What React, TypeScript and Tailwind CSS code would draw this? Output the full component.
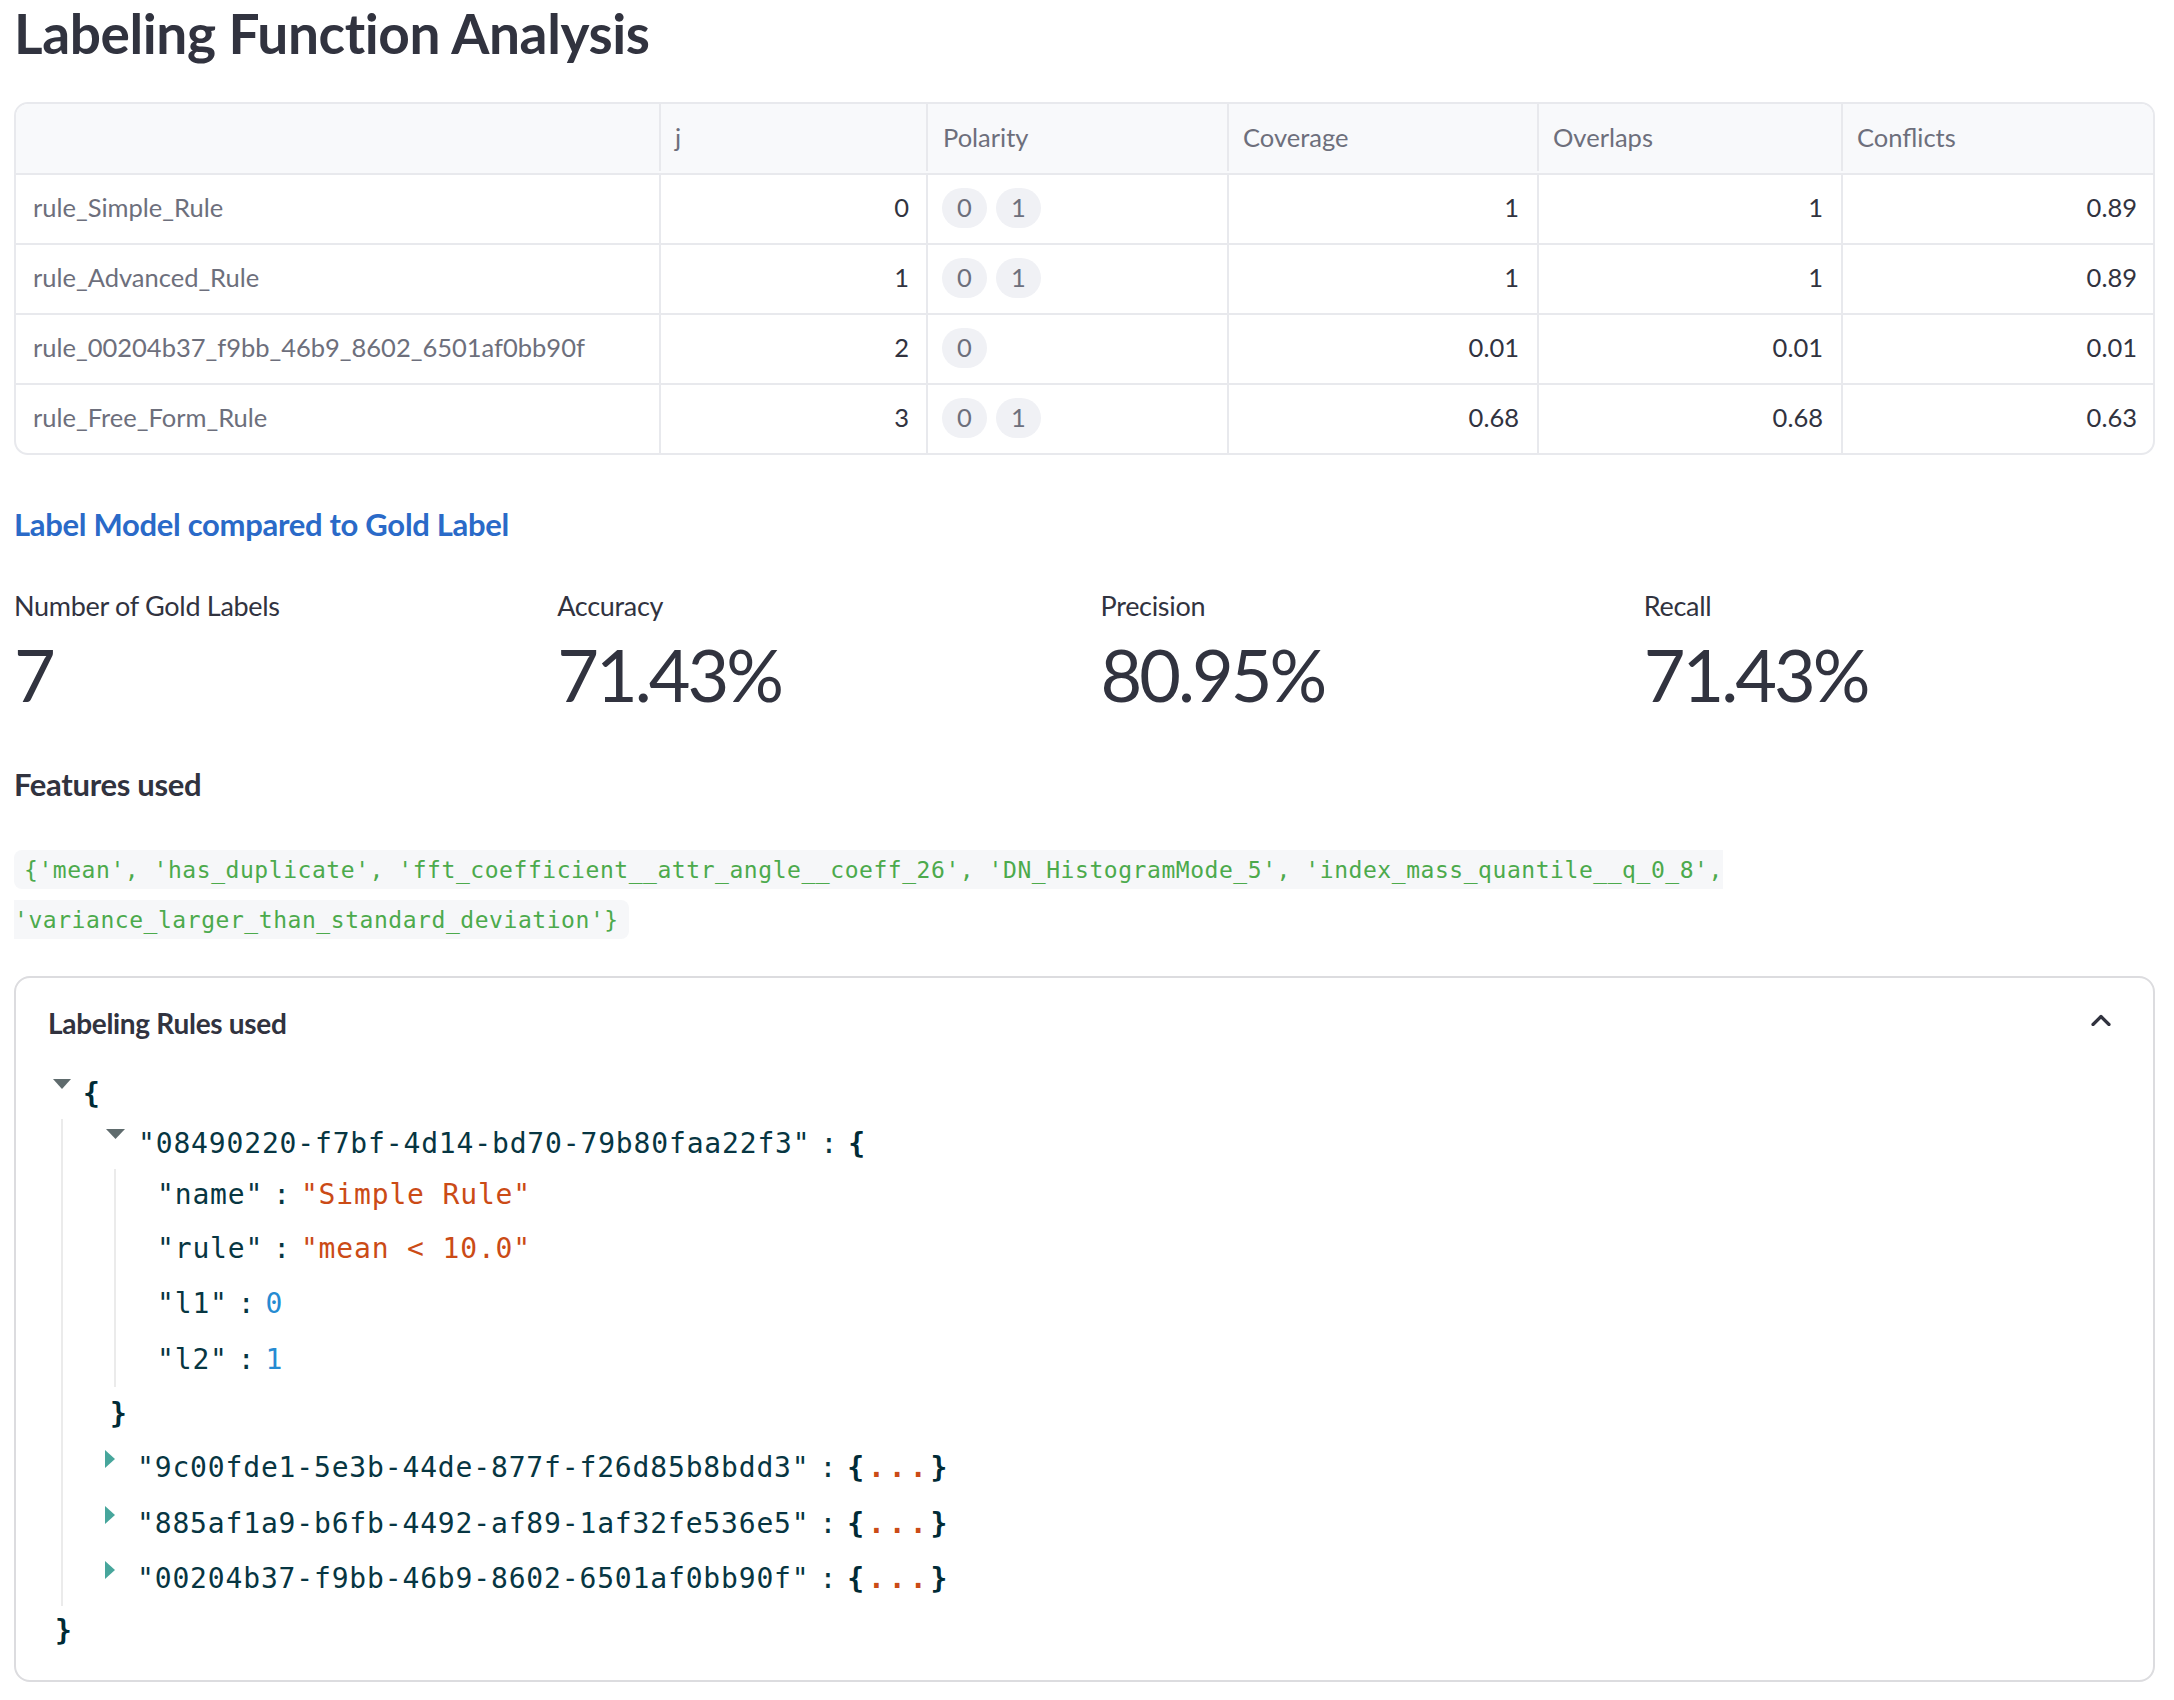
import React from "react";

type Row = [string, string, string[], string, string, string];

const rows: Row[] = [
  ["rule_Simple_Rule", "0", ["0", "1"], "1", "1", "0.89"],
  ["rule_Advanced_Rule", "1", ["0", "1"], "1", "1", "0.89"],
  ["rule_00204b37_f9bb_46b9_8602_6501af0bb90f", "2", ["0"], "0.01", "0.01", "0.01"],
  ["rule_Free_Form_Rule", "3", ["0", "1"], "0.68", "0.68", "0.63"],
];

const DownTri = ({ w = 18 }: { w?: number }) => (
  <svg width={w} height="10" viewBox={`0 0 ${w} 10`} className="shrink-0 mb-[20px]">
    <polygon points={`0,0 ${w},0 ${w / 2},10`} fill="#5f6b6d" />
  </svg>
);

const RightTri = () => (
  <svg width="10" height="18" viewBox="0 0 10 18" className="shrink-0 mb-[18px]">
    <polygon points="0,0 10,9 0,18" fill="#47a69c" />
  </svg>
);

const Key = ({ k }: { k: string }) => (
  <span className="text-[#073642]">"{k}"</span>
);
const Colon = () => <span className="mx-[10px] text-[#073642]">:</span>;

function Collapsed({ k }: { k: string }) {
  return (
    <div className="flex h-[56px] items-center pl-[42px]">
      <RightTri />
      <span className="ml-[22px] flex items-center">
        <Key k={k} />
        <Colon />
        <span className="font-bold text-[#002b36]">{"{"}</span>
        <span className="ml-[3px] font-bold text-[#cb4b16] tracking-[4px]">...</span>
        <span className="font-bold text-[#002b36]">{"}"}</span>
      </span>
    </div>
  );
}

export default function App() {
  return (
    <div className="min-h-[1700px] w-[2174px] bg-white font-['Lato',sans-serif] text-[#31333f]">
      <div className="w-[2141px] pl-[14px] box-content">
        <h1 className="text-[55px] leading-[67px] font-bold tracking-[-0.4px]">Labeling Function Analysis</h1>

        {/* Table */}
        <div className="mt-[35px] overflow-hidden rounded-[14px] border-2 border-[#e8e9ed] text-[25.5px]">
          <div className="flex h-[71px] border-b-2 border-[#e8e9ed] bg-[#f8f9fb] pb-[2px] text-[#6d6f7c]">
            <div className="w-[645px] border-r-2 border-[#e8e9ed]"></div>
            <div className="flex w-[267px] items-center border-r-2 border-[#e8e9ed] px-[14px]">j</div>
            <div className="flex w-[301px] items-center border-r-2 border-[#e8e9ed] px-[15px]">Polarity</div>
            <div className="flex w-[310px] items-center border-r-2 border-[#e8e9ed] px-[14px]">Coverage</div>
            <div className="flex w-[304px] items-center border-r-2 border-[#e8e9ed] px-[14px]">Overlaps</div>
            <div className="flex w-[310px] items-center px-[14px]">Conflicts</div>
          </div>
          {rows.map((r, i) => (
            <div
              key={r[0]}
              className={
                i < rows.length - 1
                  ? "flex h-[70px] border-b-2 border-[#e8e9ed]"
                  : "flex h-[68px]"
              }
            >
              <div className="flex w-[645px] items-center border-r-2 border-[#e8e9ed] px-[17px] pb-[4px] text-[#6d6f7c]">{r[0]}</div>
              <div className="flex w-[267px] items-center justify-end border-r-2 border-[#e8e9ed] px-[17px] pb-[4px]">{r[1]}</div>
              <div className="flex w-[301px] items-center gap-[9px] border-r-2 border-[#e8e9ed] px-[14px] pb-[2px]">
                {r[2].map((c) => (
                  <span
                    key={c}
                    className="flex h-[40px] w-[45px] items-center justify-center rounded-full bg-[#f0f1f5] pb-[2px] text-[#6d6f7c]"
                  >
                    {c}
                  </span>
                ))}
              </div>
              <div className="flex w-[310px] items-center justify-end border-r-2 border-[#e8e9ed] px-[18px] pb-[4px]">{r[3]}</div>
              <div className="flex w-[304px] items-center justify-end border-r-2 border-[#e8e9ed] px-[18px] pb-[4px]">{r[4]}</div>
              <div className="flex w-[310px] items-center justify-end px-[16px] pb-[4px]">{r[5]}</div>
            </div>
          ))}
        </div>

        {/* Label model */}
        <div className="mt-[50px] text-[31px] leading-[38px] font-bold tracking-[-0.3px] text-[#2a6ac8]">
          Label Model compared to Gold Label
        </div>

        <div className="mt-[46px] grid grid-cols-4 gap-x-[32px]">
          {[
            ["Number of Gold Labels", "7"],
            ["Accuracy", "71.43%"],
            ["Precision", "80.95%"],
            ["Recall", "71.43%"],
          ].map(([l, v]) => (
            <div key={l}>
              <div className="text-[27px] leading-[34px] tracking-[-0.3px]">{l}</div>
              <div className="mt-[8px] text-[72px] leading-[86px] tracking-[-3px]">{v}</div>
            </div>
          ))}
        </div>

        <div className="mt-[48px] text-[31px] leading-[38px] font-bold tracking-[-0.3px]">Features used</div>

        <p className="mt-[37px] text-[32px] leading-[50px]">
          <code className="rounded-[8px] bg-[#f6f7f9] px-[10px] py-[6.5px] font-['DejaVu_Sans_Mono',monospace] text-[23px] leading-[20px] tracking-[0.55px] text-[#4caa4c]">
            {"{'mean', 'has_duplicate', 'fft_coefficient__attr_angle__coeff_26', 'DN_HistogramMode_5', 'index_mass_quantile__q_0_8', 'variance_larger_than_standard_deviation'}"}
          </code>
        </p>

        {/* Expander */}
        <div className="mt-[36px] rounded-[16px] border-2 border-[#dcdcdf] pb-[24px]">
          <div className="mt-[28px] flex h-[34px] items-center justify-between pl-[32px] pr-[42px]">
            <span className="text-[28px] leading-[34px] font-bold tracking-[-0.3px]">Labeling Rules used</span>
            <svg width="20" height="12" viewBox="0 0 20 12" className="mb-[6px]">
              <polyline points="2,10.5 10,2.5 18,10.5" fill="none" stroke="#31333f" strokeWidth="3.2" strokeLinecap="round" strokeLinejoin="round" />
            </svg>
          </div>

          <div className="mt-[29px] font-['DejaVu_Sans_Mono',monospace] text-[28px] leading-none tracking-[0.84px]">
            <div className="flex h-[50px] items-center pl-[37px]">
              <DownTri />
              <span className="ml-[12px] font-bold text-[#002b36]">{"{"}</span>
            </div>
            <div className="ml-[45px] border-l-2 border-[#ebebeb]">
              <div className="flex h-[50px] items-center pl-[43px]">
                <DownTri w={19} />
                <span className="ml-[13px] flex items-center">
                  <Key k="08490220-f7bf-4d14-bd70-79b80faa22f3" />
                  <Colon />
                  <span className="font-bold text-[#002b36]">{"{"}</span>
                </span>
              </div>
              <div className="ml-[51px] border-l-2 border-[#ebebeb]">
                <div className="flex h-[52px] items-center pl-[41px]">
                  <Key k="name" />
                  <Colon />
                  <span className="text-[#cb4b16]">"Simple Rule"</span>
                </div>
                <div className="flex h-[55px] items-center pl-[41px]">
                  <Key k="rule" />
                  <Colon />
                  <span className="text-[#cb4b16]">"mean &lt; 10.0"</span>
                </div>
                <div className="flex h-[56px] items-center pl-[41px]">
                  <Key k="l1" />
                  <Colon />
                  <span className="text-[#268bd2]">0</span>
                </div>
                <div className="flex h-[55px] items-center pl-[41px]">
                  <Key k="l2" />
                  <Colon />
                  <span className="text-[#268bd2]">1</span>
                </div>
              </div>
              <div className="flex h-[53px] items-center pl-[47px]">
                <span className="font-bold text-[#002b36]">{"}"}</span>
              </div>
              <Collapsed k="9c00fde1-5e3b-44de-877f-f26d85b8bdd3" />
              <Collapsed k="885af1a9-b6fb-4492-af89-1af32fe536e5" />
              <div className="h-[54px] [&>div]:h-[54px]">
                <Collapsed k="00204b37-f9bb-46b9-8602-6501af0bb90f" />
              </div>
            </div>
            <div className="flex h-[50px] items-center pl-[39px]">
              <span className="font-bold text-[#002b36]">{"}"}</span>
            </div>
          </div>
        </div>
      </div>
    </div>
  );
}
